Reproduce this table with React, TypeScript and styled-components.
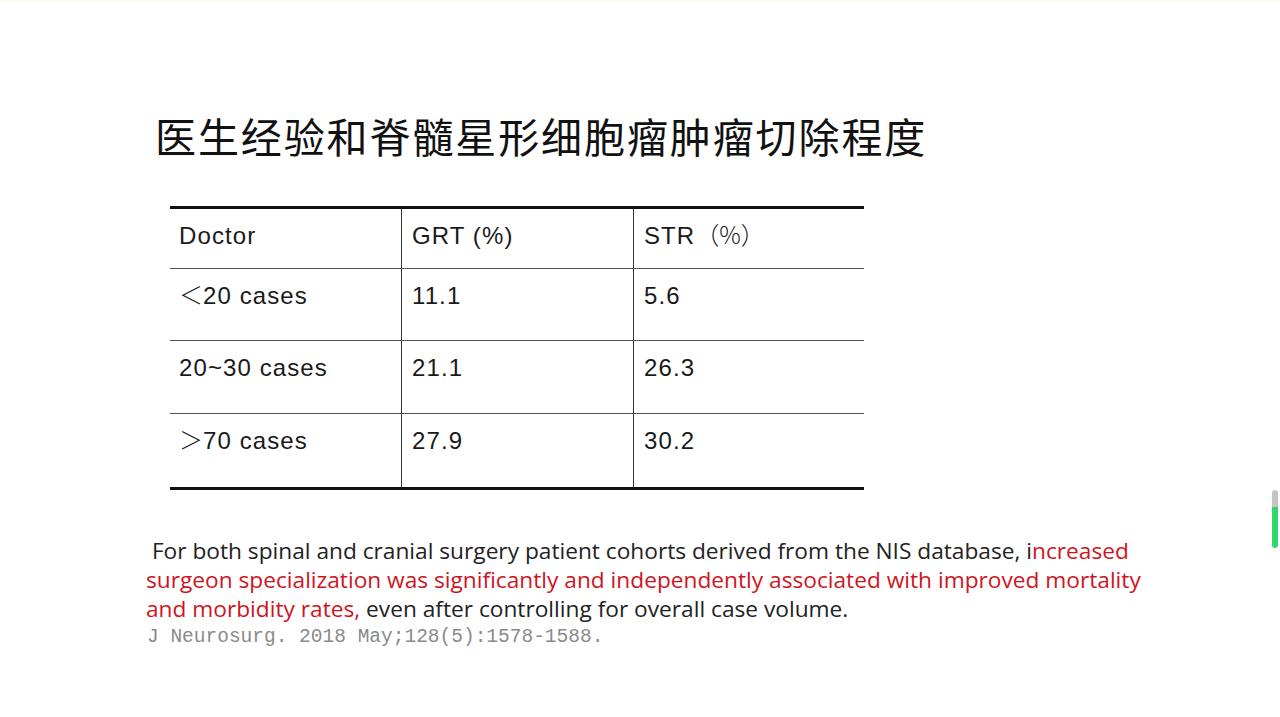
import React from "react";
import styled, { createGlobalStyle } from "styled-components";

const Global = createGlobalStyle`
  html, body { margin: 0; padding: 0; background: #ffffff; }
  body { width: 1280px; height: 717px; overflow: hidden; }
`;

const Slide = styled.div`
  position: relative;
  width: 1280px;
  height: 717px;
  background: #ffffff;
  border-top: 2px solid #fdfbef;
  box-sizing: border-box;
  display: flex;
  flex-direction: column;
`;

const Title = styled.h1`
  margin: 109px 0 0 155px;
  font-family: "Noto Sans CJK SC", sans-serif;
  font-weight: 400;
  font-size: 41px;
  line-height: 48px;
  color: #111;
  letter-spacing: 1.9px;
`;

const Table = styled.div`
  margin: 47px 0 0 170px;
  width: 694px;
  display: grid;
  grid-template-columns: 231px 232px 231px;
  border-top: 3px solid #111;
  border-bottom: 3px solid #111;
`;

const Cell = styled.div<{ $h: number; $last?: boolean; $col: number }>`
  height: ${(p) => p.$h}px;
  box-sizing: border-box;
  padding: 13px 0 0 ${(p) => (p.$col === 0 ? 9 : 10)}px;
  font-family: "Liberation Sans", Arial, sans-serif;
  font-size: 24px;
  letter-spacing: 1.1px;
  line-height: 28px;
  color: #1a1a1a;
  border-left: ${(p) => (p.$col === 0 ? "none" : "1px solid #333")};
  border-bottom: ${(p) => (p.$last ? "none" : "1px solid #555")};
`;

const Wide = styled.span`
  display: inline-block;
  font-family: "Noto Sans CJK SC", sans-serif;
  font-weight: 300;
  letter-spacing: 0;
  line-height: 22px;
`;

const Para = styled.p`
  margin: 46px 0 0 146px;
  font-family: "Open Sans", "Noto Sans", sans-serif;
  font-size: 22.7px;
  line-height: 29px;
  color: #222;
  white-space: pre;
`;

const Red = styled.span`
  color: #d0141e;
`;

const Cite = styled.div`
  margin: 0 0 0 147px;
  font-family: "Liberation Mono", "Courier New", monospace;
  font-size: 19.5px;
  line-height: 29px;
  color: #8a8a8a;
  white-space: pre;
`;

const ScrollThumb = styled.div`
  position: absolute;
  right: 2px;
  top: 488px;
  width: 6px;
  height: 58px;
  border-radius: 3px;
  background: linear-gradient(to bottom, #c4c4c4 0px, #c4c4c4 17px, #2fd96b 17px, #2fd96b 100%);
`;

const rows: { h: number; c: React.ReactNode[] }[] = [
  { h: 60, c: ["Doctor", "GRT (%)", <>STR<Wide>（%）</Wide></>] },
  { h: 72, c: [<><Wide>＜</Wide>20 cases</>, "11.1", "5.6"] },
  { h: 73, c: ["20~30 cases", "21.1", "26.3"] },
  { h: 73, c: [<><Wide>＞</Wide>70 cases</>, "27.9", "30.2"] },
];

export default function App() {
  return (
    <>
      <Global />
      <Slide>
        <Title>医生经验和脊髓星形细胞瘤肿瘤切除程度</Title>
        <Table>
          {rows.map((r, i) =>
            r.c.map((t, j) => (
              <Cell key={`${i}-${j}`} $h={r.h} $col={j} $last={i === rows.length - 1}>
                {t}
              </Cell>
            ))
          )}
        </Table>
        <Para>
          {" For both spinal and cranial surgery patient cohorts derived from the NIS database, i"}
          <Red>
            {"ncreased\nsurgeon specialization was significantly and independently associated with improved mortality\nand morbidity rates,"}
          </Red>
          {" even after controlling for overall case volume."}
        </Para>
        <Cite>J Neurosurg. 2018 May;128(5):1578-1588.</Cite>
        <ScrollThumb />
      </Slide>
    </>
  );
}
